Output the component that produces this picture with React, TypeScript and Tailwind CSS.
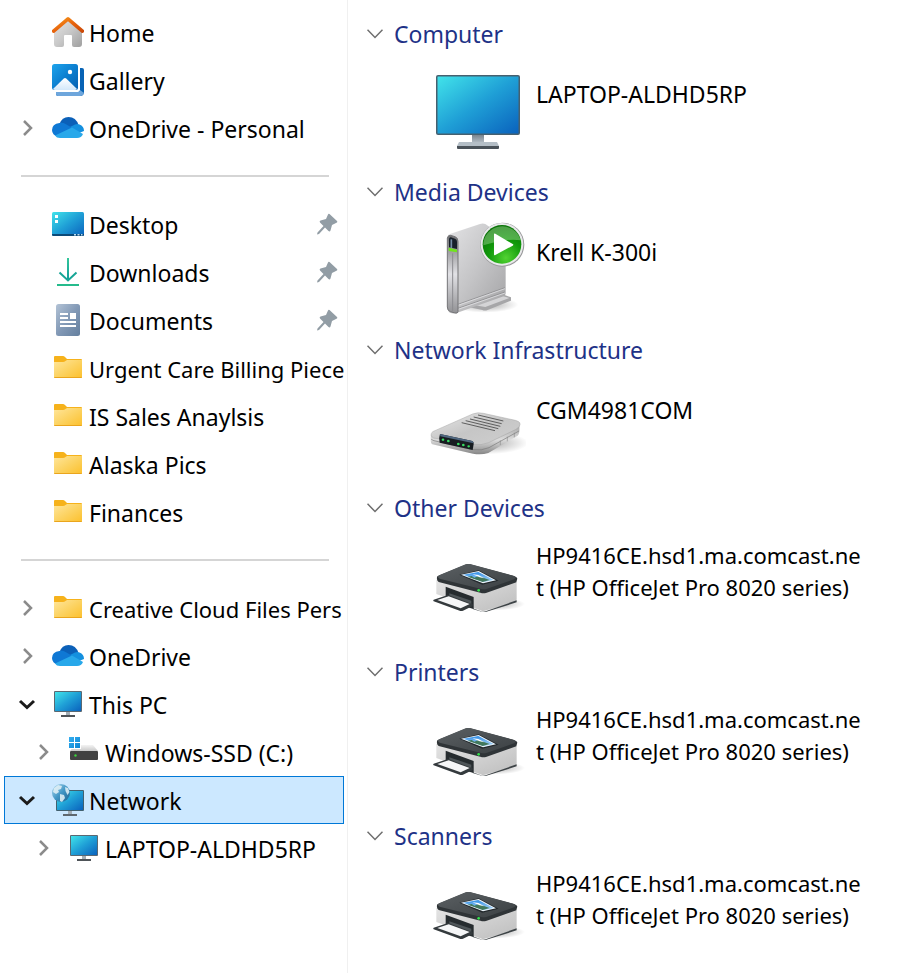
import type { ReactNode } from "react";

function Gradient({ id, stops, vertical = false }: { id: string; stops: string[]; vertical?: boolean }) {
  return (
    <linearGradient id={id} x1="0" y1="0" x2={vertical ? "0" : "1"} y2="1">
      {stops.map((color, i) => (
        <stop key={i} offset={i / (stops.length - 1)} stopColor={color} />
      ))}
    </linearGradient>
  );
}

/* Gradients shared by every icon on the page. */
function SharedDefs() {
  return (
    <svg width="0" height="0" className="absolute" aria-hidden="true">
      <defs>
        <Gradient id="screen" stops={["#41e3ea", "#1f9fd6", "#0a62bd"]} />
        <Gradient id="roof" stops={["#f79a1b", "#e8640d", "#cc4a08"]} />
        <Gradient id="wall" stops={["#e6e6e6", "#c9c9c9", "#9f9f9f"]} />
        <Gradient id="photo" stops={["#1ea4ec", "#0c7fd0", "#0760b0"]} />
        <Gradient id="hill" stops={["#ffffff", "#d3e8fa"]} vertical />
        <Gradient id="arrow" stops={["#34c79a", "#109c9c"]} vertical />
        <Gradient id="doc" stops={["#b3c3d6", "#8299b6", "#647f9e"]} />
        <Gradient id="folder" stops={["#ffe69c", "#fcd363", "#fcc02c"]} />
        <Gradient id="stand" stops={["#79858f", "#b6bfc7"]} vertical />
        <Gradient id="win" stops={["#35aff0", "#0a84d4"]} />
        <Gradient id="driveTop" stops={["#f4f4f4", "#c9c9c9"]} vertical />
        <Gradient id="globe" stops={["#b5dcef", "#4297c6", "#1c618f"]} />
        <Gradient id="caseSide" stops={["#e3e3e5", "#c5c5c7", "#a2a2a4"]} />
        <Gradient id="caseFront" stops={["#6f6f71", "#e2e2e6", "#929295"]} vertical />
        <Gradient id="routerTop" stops={["#e9e9e9", "#c6c6c6", "#cfcfcf"]} />
        <Gradient id="routerFront" stops={["#a3a3a3", "#dcdcdc", "#858585"]} vertical />
        <Gradient id="printerTop" stops={["#5b6063", "#3b4043"]} />
        <Gradient id="printerSide" stops={["#e4e4e4", "#bdbdbd"]} />
        <Gradient id="sky" stops={["#2e8ce6", "#b9defa"]} vertical />
        <radialGradient id="play" cx="0.6" cy="0.85" r="0.8">
          <stop offset="0" stopColor="#52d332" />
          <stop offset="0.55" stopColor="#119a0b" />
          <stop offset="1" stopColor="#0a7408" />
        </radialGradient>
        <radialGradient id="shadow">
          <stop offset="0" stopColor="#000" stopOpacity="0.35" />
          <stop offset="1" stopColor="#000" stopOpacity="0" />
        </radialGradient>
      </defs>
    </svg>
  );
}

function SmallIcon({ children }: { children: ReactNode }) {
  return (
    <svg viewBox="0 0 32 32" className="size-8 shrink-0" aria-hidden="true">
      {children}
    </svg>
  );
}

function HomeIcon() {
  return (
    <SmallIcon>
      <path d="M2 14 16 3l14 11v14q0 3-3 3h-5q-2 0-2-2v-9q0-1-1-1h-6q-1 0-1 1v9q0 2-2 2H5q-3 0-3-3z" fill="url(#wall)" />
      <path d="M1.600 15.200 16 2.800l14.400 12.400" fill="none" stroke="url(#roof)" strokeWidth="3.600" strokeLinecap="round" strokeLinejoin="round" />
    </SmallIcon>
  );
}

function GalleryIcon() {
  return (
    <SmallIcon>
      <path d="M28 4h2q2 0 2 2v22q0 4-4 4H6q-2 0-2-2v-2h22q2 0 2-2z" fill="#0763b5" />
      <path d="M4 28h22q2 0 2-2l4 3q-1 3-4 3H6q-2 0-2-2z" fill="#6ea6dc" />
      <rect width="26" height="26" rx="2.500" fill="url(#photo)" />
      <path d="m1 25 10.500-10.300q1.500-1.400 3 0L25 25q-1 1-2 1H3q-1 0-2-1z" fill="url(#hill)" />
      <circle cx="18" cy="8" r="2.200" fill="#fff" />
    </SmallIcon>
  );
}

function CloudIcon() {
  return (
    <SmallIcon>
      <path d="M7.500 12Q10 5 16.500 5q7.500 0 10 8L17 18 7.500 12z" fill="#0b60b8" />
      <path d="M7.500 11q3-1 6 1l7 4L6 25q-6-2-6-7 0-6 7.500-7z" fill="#0f78d4" />
      <path d="m20 14 3-1.600q2.500-1 4.500 0Q32 14 32 19l-5 2-9-6z" fill="#1490df" />
      <path d="M3 23.500 20 15.500l11 6.500q-1.500 4-6 4H8q-3.500 0-5-2.500z" fill="#28a8ea" />
    </SmallIcon>
  );
}

function DesktopIcon() {
  return (
    <SmallIcon>
      <rect y="4" width="32" height="24" rx="1.500" fill="url(#screen)" />
      <path d="M0 26h32v.500q0 1.500-1.500 1.500h-29Q0 28 0 26.500z" fill="#0c4a78" />
      <path d="M3 7h3v3H3zM3 12h3v3H3z" fill="#fff" />
      <path d="M22 26h2v1.500h-2zM25.500 26h2v1.500h-2zM29 26h1.500v1.500H29z" fill="#b9dcf2" />
    </SmallIcon>
  );
}

function DownloadsIcon() {
  return (
    <SmallIcon>
      <path d="M15 2h2v22h-2z" fill="url(#arrow)" />
      <path d="m7.500 16.500 8.500 8 8.500-8" fill="none" stroke="#16a596" strokeWidth="2" />
      <path d="M5 28h22v2H5z" fill="#25bb8c" />
    </SmallIcon>
  );
}

function DocumentsIcon() {
  return (
    <SmallIcon>
      <rect x="4" width="24" height="32" rx="2.500" fill="url(#doc)" />
      <path d="M8 9h8v2H8zM8 13h8v2H8zM18 9h6v6h-6zM8 17h16v2H8zM8 21h16v2H8z" fill="#fff" />
    </SmallIcon>
  );
}

function FolderIcon() {
  return (
    <SmallIcon>
      <path d="M2 5q0-1 1-1h8q1 0 2 1l2 2h14q1 0 1 1v17H2z" fill="#f6b21b" />
      <path d="M2 10h9q1.500 0 2.500-1L15 8h15v17q0 1-1 1H3q-1 0-1-1z" fill="url(#folder)" />
      <path d="M2 25h28q0 1-1 1H3q-1 0-1-1z" fill="#eaa51d" />
    </SmallIcon>
  );
}

function MonitorIcon() {
  return (
    <SmallIcon>
      <rect x="2" y="3" width="28" height="21" rx="1" fill="#5a6872" />
      <rect x="3" y="4" width="26" height="19" fill="url(#screen)" />
      <path d="M14 24h4v3h-4z" fill="#a3adb5" />
      <path d="M9 27h14v2H9z" fill="#4e5358" />
    </SmallIcon>
  );
}

function DriveIcon() {
  return (
    <SmallIcon>
      <path d="M7 9h18l5 6H2z" fill="url(#driveTop)" />
      <rect x="2" y="15" width="28" height="9" rx="1" fill="#424242" />
      <circle cx="7.500" cy="19.500" r="1.200" fill="#3bd33b" />
      <path d="M0 0h13v13H0z" fill="#fff" />
      <path d="M1 1h5v5H1zM7 1h5v5H7zM1 7h5v5H1zM7 7h5v5H7z" fill="url(#win)" />
    </SmallIcon>
  );
}

function NetworkIcon() {
  return (
    <SmallIcon>
      <rect x="4" y="6" width="28" height="21" rx="1" fill="#42616f" />
      <rect x="5" y="7" width="26" height="19" fill="url(#screen)" />
      <path d="M16 27h4v3h-4z" fill="#a3adb5" />
      <path d="M11 30h14v2H11z" fill="#5f686f" />
      <circle cx="9" cy="9" r="9" fill="url(#globe)" />
      <path d="m2 4 4-3 4 1-1 3-3 1 1 2-3 2-3-2zM8 10l4 1 1 3-3 4-2-1zM13 3l3 1 1.500 4-2 3-2-4z" fill="#e4f2f7" opacity="0.85" />
    </SmallIcon>
  );
}

function PinIcon() {
  return (
    <svg viewBox="0 0 22 22" className="size-[22px] shrink-0" role="img" aria-label="Pinned">
      <path d="m13.500 1 7.500 7q1 1-.5 1.800L16 12l-1.500 5.500q-.7 1.500-2 .5L9 14.500 3 21l-2 .5.500-2L7.500 13 4 9.500q-1-1.300.5-2L10 6l2-4.500q.5-1.200 1.500-.5z" fill="#929da5" />
    </svg>
  );
}

function LargeIcon({ children }: { children: ReactNode }) {
  return (
    <svg viewBox="0 0 96 96" className="size-24 shrink-0" aria-hidden="true">
      {children}
    </svg>
  );
}

function ComputerArt() {
  return (
    <LargeIcon>
      <rect x="6" y="12" width="84" height="60" rx="2" fill="#46606f" />
      <rect x="7.500" y="13.500" width="81" height="57" rx="0.500" fill="url(#screen)" />
      <path d="M42 72h12v8H42z" fill="url(#stand)" />
      <path d="M29 79h38l2 4H27z" fill="#b4bec6" />
      <path d="M27 83h42v2q0 1-1 1H28q-1 0-1-1z" fill="#4a5259" />
    </LargeIcon>
  );
}

function MediaArt() {
  return (
    <LargeIcon>
      <g transform="translate(-10 -7) scale(.3333)">
        <ellipse cx="195" cy="272" rx="100" ry="24" fill="url(#shadow)" />
        <path d="M148 276 246 240l27 10v10l-70 28q-8 3-16 0l-39-8z" fill="#a6a6a8" />
        <path d="m165 274 75-30 28 8-72 27z" fill="#d4d4d6" />
        <path d="M84 64q2-3 8-5l88-29q8-3 16 0l50 35q11 6 11 18v155q0 6-6 9l-141 50q-15 4-24-3z" fill="url(#caseSide)" />
        <path d="m114 271 141-50M114 283l141-49" stroke="#8e8e90" strokeWidth="2.500" fill="none" />
        <path d="m114 274 141-50M114 286l141-49" stroke="#ececee" strokeWidth="2" fill="none" />
        <path d="M82 72q2-9 10-8l13 4q9 3 9 14v211q-1 6-9 4l-14-4q-9-3-9-14z" fill="url(#caseFront)" stroke="#737376" strokeWidth="3" />
        <path d="M98 118v174" stroke="#8b8b90" strokeWidth="3" />
        <path d="M87 75q1-6 6-5l12 4q6 2 6 9v22l-24-5z" fill="#18202a" />
        <path d="M94 76v26" stroke="#758da5" strokeWidth="5" />
        <path d="m86 101 25 6v8l-25-4z" fill="#70e51c" />
        <circle cx="247" cy="92" r="66" fill="#979799" />
        <circle cx="246" cy="91" r="64" fill="#e9e9eb" />
        <circle cx="246" cy="91" r="58" fill="url(#play)" />
        <path d="M190 94a57 57 0 0 1 112-15q-40-8-112 15z" fill="#b6e3ab" opacity="0.4" />
        <path d="M222 61q0-4 4-2l52 31q4 2 0 5l-52 28q-4 2-4-2z" fill="#fff" />
      </g>
    </LargeIcon>
  );
}

function RouterArt() {
  return (
    <LargeIcon>
      <g transform="translate(-10 20) scale(.3333)">
        <ellipse cx="200" cy="132" rx="125" ry="34" fill="url(#shadow)" />
        <path d="M33 108q-3 24 4 28l122 28q24 5 46-2l88-52q7-5 5-32z" fill="url(#routerFront)" />
        <path d="M38 98 158 45q15-6 32-2l96 21q20 5 12 18-3 5-10 9l-82 40q-22 9-49 5L41 117q-14-7-3-19z" fill="url(#routerTop)" stroke="#a6a6a6" strokeWidth="1.500" />
        <path d="M34 120q2 4 8 5l115 27q28 4 50-6l90-50" fill="none" stroke="#787878" strokeWidth="2" />
        <path d="m174 48 76 18M161 54l84 20M150 60l91 22M137 65l98 24M125 71l100 24" stroke="#474747" strokeWidth="2.500" />
        <path d="M241 124v14M262 113v14M283 101v14" stroke="#8b8b8b" strokeWidth="2" />
        <path d="m60 105 94 20q8 2 7 10l-3 18-99-22q-4-12 1-26z" fill="#171c20" />
        <path d="m60 105 94 20q7 1 7 8L61 112z" fill="#506780" />
        <g fill="#37dc62">
          <ellipse cx="69" cy="122" rx="4" ry="3.500" />
          <ellipse cx="85" cy="126" rx="4" ry="3.500" />
          <ellipse cx="115" cy="135" rx="4" ry="3.500" />
          <ellipse cx="130" cy="138" rx="4" ry="3.500" />
          <ellipse cx="146" cy="142" rx="4" ry="3.500" />
        </g>
      </g>
    </LargeIcon>
  );
}

function PrinterArt() {
  return (
    <LargeIcon>
      <g transform="translate(-10 10) scale(.3333)">
        <ellipse cx="215" cy="165" rx="100" ry="20" fill="url(#shadow)" />
        <path d="M49 92v43l138 51q6 1 12-2l87-26q4-2 4-7V98z" fill="url(#printerSide)" />
        <path d="m158 178 29 10q6 1 12-2l91-32v6l-91 28q-8 2-14 0l-27-8z" fill="#3d4346" />
        <path d="M52 82 136 47q6-3 14-1l132 35q13 4 9 11l-2 8-91 32q-9 2-17-1L56 99q-8-7-4-17z" fill="#2f3437" />
        <path d="M57 79 137 46q6-2 13-1l130 35q14 5 2 11l-83 29q-8 2-15 0L59 89q-9-5-2-10z" fill="url(#printerTop)" />
        <path d="m118 77 58-13 60 31-49 12z" fill="#22282c" />
        <path d="m123 77 53-11 52 28-39 9z" fill="#f1f7fb" />
        <path d="m130 77 45-8 46 24-31 7z" fill="url(#sky)" />
        <path d="m143 83 12-2 8 5 12-5 34 12-21 6z" fill="#42785c" />
        <path d="m157 76 18 2 18 10-14-3z" fill="#fff" />
        <path d="m77 113 84 31v36l-84-25z" fill="#262c2f" />
        <path d="m88 133 66 22v18l-66-19z" fill="#4f5659" />
        <path d="m41 152 36-12 8-2 73 28v5l-29 14q-5 2-10 0l-78-28q-3-2 0-5z" fill="#343a3d" />
        <path d="m52 153 34-11 63 23-27 13z" fill="#f5f6f7" />
        <circle cx="176" cy="124" r="4" fill="#35e44d" />
      </g>
    </LargeIcon>
  );
}

type Node = {
  label: string;
  icon: ReactNode;
  arrow?: "closed" | "open";
  pinned?: boolean;
  nested?: boolean;
  selected?: boolean;
  long?: boolean;
};

const groups: Node[][] = [
  [
    { label: "Home", icon: <HomeIcon /> },
    { label: "Gallery", icon: <GalleryIcon /> },
    { label: "OneDrive - Personal", icon: <CloudIcon />, arrow: "closed" },
  ],
  [
    { label: "Desktop", icon: <DesktopIcon />, pinned: true },
    { label: "Downloads", icon: <DownloadsIcon />, pinned: true },
    { label: "Documents", icon: <DocumentsIcon />, pinned: true },
    { label: "Urgent Care Billing Piece", icon: <FolderIcon />, long: true },
    { label: "IS Sales Anaylsis", icon: <FolderIcon /> },
    { label: "Alaska Pics", icon: <FolderIcon /> },
    { label: "Finances", icon: <FolderIcon /> },
  ],
  [
    { label: "Creative Cloud Files Pers", icon: <FolderIcon />, arrow: "closed", long: true },
    { label: "OneDrive", icon: <CloudIcon />, arrow: "closed" },
    { label: "This PC", icon: <MonitorIcon />, arrow: "open" },
    { label: "Windows-SSD (C:)", icon: <DriveIcon />, arrow: "closed", nested: true },
    { label: "Network", icon: <NetworkIcon />, arrow: "open", selected: true },
    { label: "LAPTOP-ALDHD5RP", icon: <MonitorIcon />, arrow: "closed", nested: true },
  ],
];

function TreeRow({ node }: { node: Node }) {
  const open = node.arrow === "open";
  return (
    <li
      className={`flex h-12 items-center border ${node.nested ? "pl-[27px]" : "pl-[11px]"} ${
        node.selected ? "border-[#0078d7] bg-[#cce8ff]" : "border-transparent"
      }`}
    >
      <div className="mr-3 size-6 shrink-0">
        {node.arrow && (
          <button type="button" aria-expanded={open} aria-label={`Expand ${node.label}`} className="block size-6">
            <svg viewBox="0 0 24 24" fill="none" className="size-6">
              {open ? (
                <path d="m4 9 7 6.500L18 9" stroke="#1b1b1b" strokeWidth="3" />
              ) : (
                <path d="m8 5 7 7-7 7" stroke="#8b8b8b" strokeWidth="2.500" />
              )}
            </svg>
          </button>
        )}
      </div>
      <a href="#" className="flex min-w-0 flex-1 items-center">
        {node.icon}
        <span className={`ml-[5px] flex-1 pt-[2px] whitespace-nowrap ${node.long ? "text-[22px]" : ""}`}>{node.label}</span>
      </a>
      {node.pinned && (
        <div className="pr-[5px]">
          <PinIcon />
        </div>
      )}
    </li>
  );
}

const printerName = "HP9416CE.hsd1.ma.comcast.net (HP OfficeJet Pro 8020 series)";

const sections: { title: string; label: string; art: ReactNode; tall?: boolean }[] = [
  { title: "Computer", label: "LAPTOP-ALDHD5RP", art: <ComputerArt /> },
  { title: "Media Devices", label: "Krell K-300i", art: <MediaArt /> },
  { title: "Network Infrastructure", label: "CGM4981COM", art: <RouterArt /> },
  { title: "Other Devices", label: printerName, art: <PrinterArt />, tall: true },
  { title: "Printers", label: printerName, art: <PrinterArt />, tall: true },
  { title: "Scanners", label: printerName, art: <PrinterArt />, tall: true },
];

export default function App() {
  return (
    <div className="flex min-h-screen bg-white font-['Noto_Sans','Open_Sans',sans-serif] text-[23px] leading-8 text-black">
      <SharedDefs />
      <nav aria-label="Folders" className="w-[348px] shrink-0 border-r border-[#f0f0f0] px-1 pt-2 pr-[3px]">
        {groups.map((nodes, i) => (
          <div key={i}>
            {i > 0 && (
              <div className="flex h-12 items-center pr-[15px] pl-[17px]">
                <hr className="h-[2px] flex-1 border-0 bg-[#d5d5d5]" />
              </div>
            )}
            <ul>
              {nodes.map((node) => (
                <TreeRow key={node.label} node={node} />
              ))}
            </ul>
          </div>
        ))}
      </nav>
      <main className="min-w-0 flex-1 pt-[14px] pl-[19px]">
        {sections.map((s) => (
          <section key={s.title} className="group">
            <h2 className="h-10 text-[#1e3287]">
              <button type="button" aria-expanded="true" className="flex h-10 items-center gap-[11px]">
                <svg viewBox="0 0 16 10" fill="none" className="h-[10px] w-4">
                  <path d="m.5.8 7.500 7.700L15.500.8" stroke="#6e6e6e" strokeWidth="1.500" />
                </svg>
                {s.title}
              </button>
            </h2>
            <div className={`flex gap-[10px] pl-[63px] group-last:pb-0 ${s.tall ? "pt-[11px] pb-[17px]" : "pt-[9px] pb-[13px]"}`}>
              {s.art}
              <p className={`max-w-[332px] break-all ${s.tall ? "text-[22px]" : "pt-[15px]"}`}>{s.label}</p>
            </div>
          </section>
        ))}
      </main>
    </div>
  );
}
